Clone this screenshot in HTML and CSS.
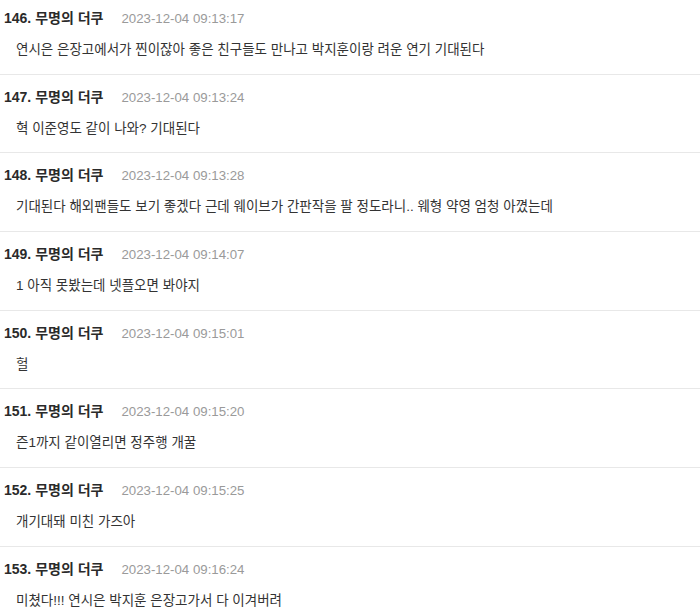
FILE: index.html
```html
<!DOCTYPE html>
<html lang="ko">
<head>
<meta charset="utf-8">
<link rel="stylesheet" href="styles.css">
</head>
<body>
<div class="list">
  <div class="row">
    <div class="head"><span class="name">146. 무명의 더쿠</span><span class="date">2023-12-04 09:13:17</span></div>
    <div class="body">연시은 은장고에서가 찐이잖아 좋은 친구들도 만나고 박지훈이랑 려운 연기 기대된다</div>
  </div>
  <div class="row">
    <div class="head"><span class="name">147. 무명의 더쿠</span><span class="date">2023-12-04 09:13:24</span></div>
    <div class="body">혁 이준영도 같이 나와? 기대된다</div>
  </div>
  <div class="row">
    <div class="head"><span class="name">148. 무명의 더쿠</span><span class="date">2023-12-04 09:13:28</span></div>
    <div class="body">기대된다 해외팬들도 보기 좋겠다 근데 웨이브가 간판작을 팔 정도라니.. 웨형 약영 엄청 아꼈는데</div>
  </div>
  <div class="row">
    <div class="head"><span class="name">149. 무명의 더쿠</span><span class="date">2023-12-04 09:14:07</span></div>
    <div class="body">1 아직 못봤는데 넷플오면 봐야지</div>
  </div>
  <div class="row">
    <div class="head"><span class="name">150. 무명의 더쿠</span><span class="date">2023-12-04 09:15:01</span></div>
    <div class="body">헐</div>
  </div>
  <div class="row">
    <div class="head"><span class="name">151. 무명의 더쿠</span><span class="date">2023-12-04 09:15:20</span></div>
    <div class="body">즌1까지 같이열리면 정주행 개꿀</div>
  </div>
  <div class="row">
    <div class="head"><span class="name">152. 무명의 더쿠</span><span class="date">2023-12-04 09:15:25</span></div>
    <div class="body">개기대돼 미친 가즈아</div>
  </div>
  <div class="row">
    <div class="head"><span class="name">153. 무명의 더쿠</span><span class="date">2023-12-04 09:16:24</span></div>
    <div class="body">미쳤다!!! 연시은 박지훈 은장고가서 다 이겨버려</div>
  </div>
</div>
</body>
</html>
```
FILE: styles.css
```css
html, body {
  margin: 0;
  padding: 0;
  background: #ffffff;
  overflow: hidden;
}
body {
  font-family: "Liberation Sans", "Noto Sans CJK KR", sans-serif;
  color: #333333;
}
.list {
  margin-top: -4px;
}
.row {
  padding: 12px 0 13.67px 4px;
  border-bottom: 1px solid #e8e8e8;
}
.head {
  display: flex;
  align-items: baseline;
  height: 20px;
  line-height: 20px;
}
.name {
  font-size: 14px;
  font-weight: bold;
  color: #2a2a2a;
}
.date {
  margin-left: 18px;
  font-size: 13.25px;
  color: #9a9a9a;
}
.body {
  margin-top: 12px;
  padding-left: 12px;
  height: 20px;
  line-height: 20px;
  font-size: 13.5px;
  color: #333333;
  white-space: nowrap;
}
```
